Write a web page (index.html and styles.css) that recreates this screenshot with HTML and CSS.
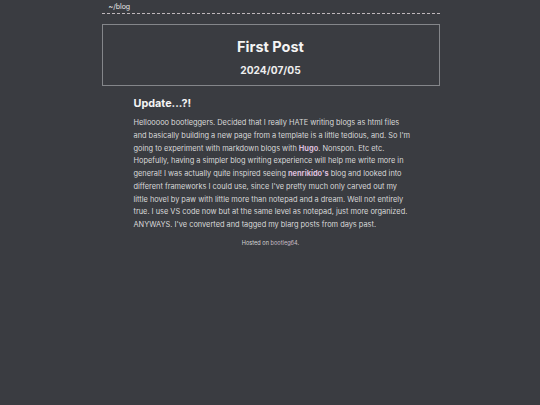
FILE: index.html
```html
<!DOCTYPE html>
<html>
<head>
<meta charset="utf-8">
<link rel="stylesheet" href="styles.css">
</head>
<body>
<div class="page">
  <header class="nav"><a class="home" href="#">~/blog</a></header>
  <div class="titlebox">
    <h1 class="title">First Post</h1>
    <div class="date">2024/07/05</div>
  </div>
  <article class="post">
    <h2 class="heading">Update...?!</h2>
    <p class="body">Hellooooo bootleggers. Decided that I really HATE writing blogs as html files and basically building a new page from a template is a little tedious, and. So I'm going to experiment with markdown blogs with <a class="link" href="#">Hugo</a>. Nonspon. Etc etc. Hopefully, having a simpler blog writing experience will help me write more in general! I was actually quite inspired seeing <a class="link" href="#">nenrikido's</a> blog and looked into different frameworks I could use, since I've pretty much only carved out my little hovel by paw with little more than notepad and a dream. Well not entirely true. I use VS code now but at the same level as notepad, just more organized. ANYWAYS. I've converted and tagged my blarg posts from days past.</p>
  </article>
  <footer class="foot">Hosted on <a class="footlink" href="#">bootleg64</a>.</footer>
</div>
</body>
</html>
```
FILE: styles.css
```css
html, body {
  margin: 0;
  padding: 0;
  background: #3a3c41;
}
body {
  font-family: Inter, "Noto Sans", sans-serif;
  color: #e2e2e2;
}
.page {
  width: 338px;
  margin: 0 auto;
  padding-left: 1px;
}
.nav {
  height: 13px;
  border-bottom: 1px dashed #bfb8bc;
  padding-left: 7px;
  font-size: 7px;
  line-height: 14px;
}
.home {
  color: #e6e6e6;
  text-decoration: none;
}
.titlebox {
  margin-top: 10px;
  height: 60px;
  border: 1px solid #84868a;
  text-align: center;
  display: flex;
  flex-direction: column;
  align-items: center;
}
.title {
  margin: 13px 0 0;
  font-size: 14.5px;
  line-height: 18px;
  font-weight: 700;
  color: #f4f4f4;
}
.date {
  margin-top: 8px;
  font-size: 10.2px;
  line-height: 13px;
  font-weight: 700;
  color: #eeeeee;
}
.post {
  padding: 0 29px 0 32px;
}
.heading {
  margin: 10px 0 0;
  font-size: 10.8px;
  line-height: 15px;
  font-weight: 700;
  color: #f4f4f4;
}
.body {
  margin: 6px 0 0;
  font-size: 7.4px;
  line-height: 12.75px;
  color: #d9d9d9;
}
.link {
  color: #dcbfdc;
  font-weight: 700;
  text-decoration: none;
}
.foot {
  margin-top: 8px;
  text-align: center;
  font-size: 5.6px;
  color: #d6d6d6;
}
.footlink {
  color: #c9bcc6;
  text-decoration: none;
}
```
